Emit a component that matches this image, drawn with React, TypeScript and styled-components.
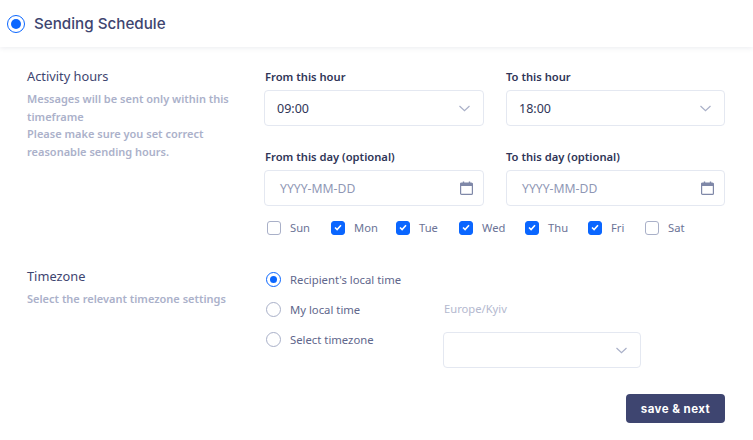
import styled, { createGlobalStyle } from "styled-components";

const GlobalStyle = createGlobalStyle`
  html, body {
    margin: 0;
    padding: 0;
    background: #fff;
  }
  * {
    box-sizing: border-box;
  }
`;

const bodyFont = `"Noto Sans", "Open Sans", sans-serif`;

const Page = styled.div`
  width: 753px;
  height: 440px;
  overflow: hidden;
  background: #fff;
  font-family: ${bodyFont};
`;

const Header = styled.header`
  display: flex;
  align-items: center;
  gap: 9px;
  height: 47px;
  padding-left: 7px;
  box-shadow: 0 1px 5px rgba(60, 70, 110, 0.1);
`;

const Title = styled.h1`
  margin: 0;
  font-family: Inter, "Noto Sans", sans-serif;
  font-size: 15.2px;
  font-weight: 500;
  color: #3e4570;
`;

const Section = styled.section`
  display: grid;
  grid-template-columns: 237px 461px;
  padding-left: 27px;
`;

const ActivitySection = styled(Section)`
  padding-top: 21px;
`;

const TimezoneSection = styled(Section)`
  padding-top: 33px;
`;

const SectionHead = styled.div`
  margin-top: -1px;
`;

const SectionTitle = styled.h2`
  margin: 0 0 5px;
  font-size: 12.8px;
  line-height: 18px;
  font-weight: 400;
  color: #3e4570;
`;

const Hint = styled.p`
  margin: 0;
  width: 215px;
  font-size: 11px;
  line-height: 17.7px;
  font-weight: 600;
  color: #abb1ca;
`;

const FieldGrid = styled.div`
  display: grid;
  grid-template-columns: 220px 219px;
  column-gap: 22px;
  row-gap: 22px;
`;

const Field = styled.div`
  display: flex;
  flex-direction: column;
  gap: 4px;
`;

const FieldLabel = styled.label<{ $inset?: boolean }>`
  padding-left: ${(p) => (p.$inset ? "1px" : "0")};
  font-size: 11.2px;
  line-height: 18px;
  font-weight: 600;
  color: #2f3557;
`;

const InputBox = styled.div`
  display: flex;
  align-items: center;
  justify-content: space-between;
  height: 36px;
  padding: 0 13px 0 12px;
  border: 1px solid #e4e8f1;
  border-radius: 4px;
  background: #fff;
`;

const SelectValue = styled.span`
  font-size: 12.5px;
  color: #2f3557;
`;

const Placeholder = styled.span`
  padding-left: 3px;
  font-size: 12.2px;
  color: #8f97b5;
`;

const IconSlot = styled.svg`
  display: block;
  flex: none;
`;

const DateIcon = styled(IconSlot)`
  margin-right: -3px;
`;

const DayRow = styled.div`
  display: flex;
  align-items: center;
  margin-top: 14px;
  padding-left: 3px;
`;

const Day = styled.label<{ $width: number }>`
  display: flex;
  align-items: center;
  gap: 9px;
  width: ${(p) => p.$width}px;
  font-size: 11.2px;
  color: #6b7396;
`;

const CheckBox = styled.span<{ $checked: boolean }>`
  display: flex;
  align-items: center;
  justify-content: center;
  width: 14px;
  height: 14px;
  border-radius: 3px;
  border: 1px solid ${(p) => (p.$checked ? "#0a66ff" : "#a9b0c8")};
  background: ${(p) => (p.$checked ? "#0a66ff" : "#fff")};
`;

const TimezoneOptions = styled.div`
  display: grid;
  grid-template-columns: 177px 198px;
  grid-auto-rows: 30px;
  padding: 2px 0 0 2px;
`;

const RadioLabel = styled.label`
  display: flex;
  align-items: center;
  gap: 9px;
  height: 18px;
  font-size: 11.3px;
  color: #5f678c;
`;

const Radio = styled.span<{ $checked?: boolean }>`
  display: flex;
  align-items: center;
  justify-content: center;
  width: 15px;
  height: 15px;
  border-radius: 50%;
  border: 1px solid ${(p) => (p.$checked ? "#0a66ff" : "#a9b0c8")};
  background: #fff;
  &::after {
    content: "";
    display: ${(p) => (p.$checked ? "block" : "none")};
    width: 7px;
    height: 7px;
    border-radius: 50%;
    background: #0a66ff;
  }
`;

const HeaderRadio = styled(Radio)`
  width: 18px;
  height: 18px;
  border-width: 1.5px;
  &::after {
    width: 10px;
    height: 10px;
  }
`;

const LocalZone = styled.span`
  height: 18px;
  padding-left: 1px;
  font-size: 11.2px;
  line-height: 18px;
  color: #b4b9cf;
`;

const ZoneSelect = styled(InputBox)`
  margin-top: 2px;
  justify-content: flex-end;
`;

const Footer = styled.div`
  display: flex;
  justify-content: flex-end;
  padding: 34px 28px 0 0;
`;

const SaveButton = styled.button`
  width: 99px;
  height: 29px;
  border: none;
  border-radius: 4px;
  background: #3e4570;
  color: #fff;
  font-family: Inter, "Noto Sans", sans-serif;
  font-size: 11.5px;
  font-weight: 700;
  letter-spacing: 0.45px;
`;

const Chevron = () => (
  <IconSlot width="11" height="7" viewBox="0 0 11 7" fill="none">
    <path d="M0.5 1 5.5 5.7 10.5 1" stroke="#a9b0c8" strokeWidth="1.2" />
  </IconSlot>
);

const CalendarIcon = () => (
  <DateIcon width="13" height="14" viewBox="0 0 13 14" fill="none">
    <rect x="0.6" y="2" width="11.8" height="11.4" rx="1" stroke="#7f88a8" strokeWidth="1.2" />
    <rect x="0.6" y="2" width="11.8" height="3" fill="#7f88a8" />
    <path d="M3.5 0.5V2.5M9.5 0.5V2.5" stroke="#7f88a8" strokeWidth="1.4" />
  </DateIcon>
);

const Tick = () => (
  <svg width="8" height="7" viewBox="0 0 8 7" fill="none">
    <path d="M1 3.5 3.1 5.5 7 1.3" stroke="#fff" strokeWidth="1.6" />
  </svg>
);

const days = [
  { name: "Sun", checked: false, width: 64 },
  { name: "Mon", checked: true, width: 65 },
  { name: "Tue", checked: true, width: 63 },
  { name: "Wed", checked: true, width: 66 },
  { name: "Thu", checked: true, width: 63 },
  { name: "Fri", checked: true, width: 57 },
  { name: "Sat", checked: false, width: 50 },
];

export default function App() {
  return (
    <Page>
      <GlobalStyle />
      <Header>
        <HeaderRadio $checked />
        <Title>Sending Schedule</Title>
      </Header>

      <ActivitySection>
        <SectionHead>
          <SectionTitle>Activity hours</SectionTitle>
          <Hint>
            Messages will be sent only within this timeframe
            <br />
            Please make sure you set correct reasonable sending hours.
          </Hint>
        </SectionHead>
        <div>
          <FieldGrid>
            <Field>
              <FieldLabel $inset>From this hour</FieldLabel>
              <InputBox>
                <SelectValue>09:00</SelectValue>
                <Chevron />
              </InputBox>
            </Field>
            <Field>
              <FieldLabel>To this hour</FieldLabel>
              <InputBox>
                <SelectValue>18:00</SelectValue>
                <Chevron />
              </InputBox>
            </Field>
            <Field>
              <FieldLabel $inset>From this day (optional)</FieldLabel>
              <InputBox>
                <Placeholder>YYYY-MM-DD</Placeholder>
                <CalendarIcon />
              </InputBox>
            </Field>
            <Field>
              <FieldLabel>To this day (optional)</FieldLabel>
              <InputBox>
                <Placeholder>YYYY-MM-DD</Placeholder>
                <CalendarIcon />
              </InputBox>
            </Field>
          </FieldGrid>
          <DayRow>
            {days.map((day) => (
              <Day key={day.name} $width={day.width}>
                <CheckBox $checked={day.checked}>{day.checked && <Tick />}</CheckBox>
                {day.name}
              </Day>
            ))}
          </DayRow>
        </div>
      </ActivitySection>

      <TimezoneSection>
        <SectionHead>
          <SectionTitle>Timezone</SectionTitle>
          <Hint>Select the relevant timezone settings</Hint>
        </SectionHead>
        <TimezoneOptions>
          <RadioLabel>
            <Radio $checked />
            Recipient's local time
          </RadioLabel>
          <span />
          <RadioLabel>
            <Radio />
            My local time
          </RadioLabel>
          <LocalZone>Europe/Kyiv</LocalZone>
          <RadioLabel>
            <Radio />
            Select timezone
          </RadioLabel>
          <ZoneSelect>
            <Chevron />
          </ZoneSelect>
        </TimezoneOptions>
      </TimezoneSection>

      <Footer>
        <SaveButton>save &amp; next</SaveButton>
      </Footer>
    </Page>
  );
}
